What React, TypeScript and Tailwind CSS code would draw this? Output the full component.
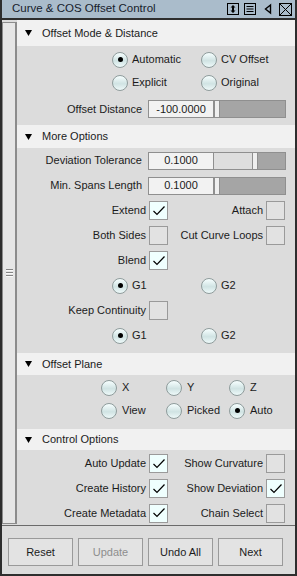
import type { ReactNode } from "react";

function Radio({ on }: { on?: boolean }) {
  return (
    <span className="flex h-[16px] w-[16px] shrink-0 items-center justify-center rounded-full border border-[#8f9c9c] bg-[linear-gradient(#f7ffff,#d0e3e3_55%,#eef9f9)]">
      {on && <span className="h-[5px] w-[5px] rounded-full bg-black" />}
    </span>
  );
}

function Check({ on }: { on?: boolean }) {
  return (
    <span
      className={`flex h-[19px] w-[19px] shrink-0 items-center justify-center border border-[#9a9a9a] ${
        on ? "bg-[#effffe]" : "bg-[#e2e2e2]"
      }`}
    >
      {on && (
        <svg width="14" height="12" viewBox="0 0 14 12">
          <path d="M1.5 6 L5 9.5 L12.5 1.5" fill="none" stroke="#000" strokeWidth="1.2" />
        </svg>
      )}
    </span>
  );
}

function Header({ title, h }: { title: string; h: string }) {
  return (
    <div className={`flex items-center bg-[#f1f1f1] ${h}`}>
      <svg className="ml-[8px]" width="7" height="6" viewBox="0 0 7 6">
        <path d="M0 0H7L3.5 6Z" fill="#000" />
      </svg>
      <span className="ml-[10px]">{title}</span>
    </div>
  );
}

function CheckPair(props: { a?: string; aOn?: boolean; b?: string; bOn?: boolean; h?: string }) {
  return (
    <div className={`flex items-center ${props.h ?? "h-[25px]"}`}>
      <div className="flex w-[151px] items-center justify-end gap-[3px]">
        {props.a && (
          <>
            <span>{props.a}</span>
            <Check on={props.aOn} />
          </>
        )}
      </div>
      {props.b && (
        <div className="flex w-[117px] items-center justify-end gap-[3px]">
          <span>{props.b}</span>
          <Check on={props.bOn} />
        </div>
      )}
    </div>
  );
}

function RadioPair({ a, b, on, h }: { a: string; b: string; on: number; h: string }) {
  return (
    <div className={`flex items-center pl-[95px] ${h}`}>
      <label className="flex w-[89px] items-center gap-[4px]">
        <Radio on={on === 0} />
        {a}
      </label>
      <label className="flex items-center gap-[4px]">
        <Radio on={on === 1} />
        {b}
      </label>
    </div>
  );
}

function FieldRow({ label, value, pos, h }: { label: string; value: string; pos: number; h: string }) {
  return (
    <div className={`flex items-center ${h}`}>
      <span className="w-[125px] text-right">{label}</span>
      <div className="ml-[6px] flex h-[18px] w-[66px] items-center justify-center border border-[#8f8f8f] bg-[#f2f2f2]">
        {value}
      </div>
      <div className="flex h-[18px] w-[72px] border border-l-0 border-[#8f8f8f]">
        <div className="bg-[#dedede]" style={{ width: pos }} />
        <div className="w-[6px] border-x border-[#8f8f8f] bg-[#efefef]" />
        <div className="flex-1 bg-[#a5a5a5]" />
      </div>
    </div>
  );
}

function PlaneRow({ items, on }: { items: string[]; on: number }) {
  const widths = ["w-[65px]", "w-[63px]", ""];
  return (
    <div className="flex h-[23px] items-center pl-[84px]">
      {items.map((t, i) => (
        <label key={t} className={`flex items-center gap-[5px] ${widths[i]}`}>
          <Radio on={i === on} />
          {t}
        </label>
      ))}
    </div>
  );
}

function Button({ children, off }: { children: ReactNode; off?: boolean }) {
  return (
    <button
      className={`flex h-[28px] w-[65px] items-center justify-center border border-[#9a9a9a] bg-[#e3e3e3] ${
        off ? "text-[#8e8e8e]" : ""
      }`}
    >
      {children}
    </button>
  );
}

export default function App() {
  return (
    <div className="flex h-[576px] w-[297px] flex-col border-x-2 border-b-2 border-[#2e2e2e] bg-[#dcdcdc] font-['Liberation_Sans',Arial,sans-serif] text-[11px] text-[#1b1b1b]">
      {/* title bar */}
      <div className="flex h-[20px] shrink-0 items-center border-b-2 border-[#2e2e2e] bg-[#aabccb] pl-[10px] text-[#17212b]">
        <span className="text-[11.5px]">Curve &amp; COS Offset Control</span>
        <div className="ml-auto mr-[3px] flex items-center">
          <svg width="12" height="12" viewBox="0 0 12 12">
            <rect x="0.5" y="0.5" width="11" height="11" fill="none" stroke="#000" />
            <path d="M6 2 L8.5 4.5 H3.5Z M6 10 L8.5 7.5 H3.5Z" fill="#000" />
            <rect x="5" y="4" width="2" height="4" fill="#000" />
          </svg>
          <svg className="ml-[5px]" width="12" height="12" viewBox="0 0 12 12">
            <rect x="0.5" y="0.5" width="11" height="11" fill="none" stroke="#000" />
            <path d="M2.5 3.5H9.5M2.5 6H9.5M2.5 8.5H9.5" stroke="#000" />
          </svg>
          <svg className="ml-[8px]" width="8" height="12" viewBox="0 0 8 12">
            <path d="M6.5 2 L1.5 6 L6.5 10Z" fill="none" stroke="#000" strokeWidth="1.4" />
          </svg>
          <svg className="ml-[7px]" width="13" height="13" viewBox="0 0 13 13">
            <rect x="0.5" y="0.5" width="12" height="12" fill="none" stroke="#000" />
            <path d="M1 1L12 12M12 1L1 12" stroke="#000" />
          </svg>
        </div>
      </div>

      {/* body */}
      <div className="flex h-[506px] shrink-0 border-b border-[#6b6b6b]">
        <div className="mb-[1px] mt-[2px] flex w-[15px] shrink-0 flex-col items-center justify-center gap-[1px] border border-r-2 border-[#8c8c8c] bg-[#e6e6e6]">
          <div className="h-[2px] w-[7px] border-t border-[#858585] bg-[#fafafa]" />
          <div className="h-[2px] w-[7px] border-t border-[#858585] bg-[#fafafa]" />
          <div className="h-[2px] w-[7px] border-t border-[#858585] bg-[#fafafa]" />
        </div>

        <div className="flex flex-1 flex-col">
          <Header title="Offset Mode & Distance" h="h-[26px]" />
          <div className="flex flex-col pb-[4px] pt-[2px]">
            <RadioPair a="Automatic" b="CV Offset" on={0} h="h-[23px]" />
            <RadioPair a="Explicit" b="Original" on={-1} h="h-[23px]" />
            <div className="mt-[3px]">
              <FieldRow label="Offset Distance" value="-100.0000" pos={0} h="h-[24px]" />
            </div>
          </div>

          <Header title="More Options" h="h-[23px]" />
          <div className="flex flex-col pb-[5px]">
            <FieldRow label="Deviation Tolerance" value="0.1000" pos={38} h="h-[25px]" />
            <FieldRow label="Min. Spans Length" value="0.1000" pos={0} h="h-[25px]" />
            <CheckPair a="Extend" aOn b="Attach" />
            <CheckPair a="Both Sides" b="Cut Curve Loops" />
            <CheckPair a="Blend" aOn />
            <RadioPair a="G1" b="G2" on={0} h="h-[25px]" />
            <CheckPair a="Keep Continuity" />
            <RadioPair a="G1" b="G2" on={0} h="h-[25px]" />
          </div>

          <Header title="Offset Plane" h="h-[22px]" />
          <div className="flex flex-col pb-[7px] pt-[1px]">
            <PlaneRow items={["X", "Y", "Z"]} on={-1} />
            <PlaneRow items={["View", "Picked", "Auto"]} on={2} />
          </div>

          <Header title="Control Options" h="h-[21px]" />
          <div className="flex flex-col pt-[1px]">
            <CheckPair a="Auto Update" aOn b="Show Curvature" />
            <CheckPair a="Create History" aOn b="Show Deviation" bOn />
            <CheckPair a="Create Metadata" aOn b="Chain Select" h="h-[24px]" />
          </div>
        </div>
      </div>

      {/* footer */}
      <div className="flex flex-1 gap-[5px] pl-[6px] pt-[12px]">
        <Button>Reset</Button>
        <Button off>Update</Button>
        <Button>Undo All</Button>
        <Button>Next</Button>
      </div>
    </div>
  );
}
